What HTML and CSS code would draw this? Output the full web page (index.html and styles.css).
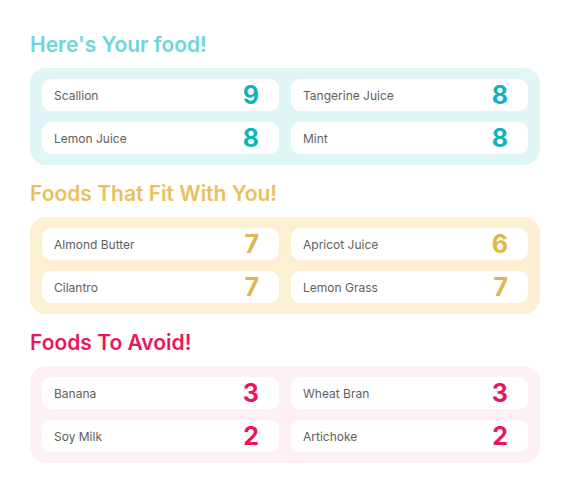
FILE: index.html
```html
<!DOCTYPE html>
<html>
<head>
<meta charset="utf-8">
<link rel="stylesheet" href="styles.css">
</head>
<body>
<section class="group teal">
  <h2 class="title">Here's Your food!</h2>
  <div class="box">
    <div class="card"><span class="name">Scallion</span><span class="num">9</span></div>
    <div class="card"><span class="name">Tangerine Juice</span><span class="num">8</span></div>
    <div class="card"><span class="name">Lemon Juice</span><span class="num">8</span></div>
    <div class="card"><span class="name">Mint</span><span class="num">8</span></div>
  </div>
</section>
<section class="group gold">
  <h2 class="title">Foods That Fit With You!</h2>
  <div class="box">
    <div class="card"><span class="name">Almond Butter</span><span class="num">7</span></div>
    <div class="card"><span class="name">Apricot Juice</span><span class="num">6</span></div>
    <div class="card"><span class="name">Cilantro</span><span class="num">7</span></div>
    <div class="card"><span class="name">Lemon Grass</span><span class="num">7</span></div>
  </div>
</section>
<section class="group pink">
  <h2 class="title">Foods To Avoid!</h2>
  <div class="box">
    <div class="card"><span class="name">Banana</span><span class="num">3</span></div>
    <div class="card"><span class="name">Wheat Bran</span><span class="num">3</span></div>
    <div class="card"><span class="name">Soy Milk</span><span class="num">2</span></div>
    <div class="card"><span class="name">Artichoke</span><span class="num">2</span></div>
  </div>
</section>
</body>
</html>
```
FILE: styles.css
```css
html, body { margin: 0; background: #fff; }
body {
  padding: 32px 30px 0 30px;
  font-family: Inter, "Noto Sans", sans-serif;
}
.group { margin-bottom: 16px; }
.title {
  margin: 0 0 11px 0;
  font-size: 21px;
  line-height: 25px;
  font-weight: 600;
}
.box {
  width: 486px;
  padding: 11px 12px;
  border-radius: 16px;
  display: grid;
  grid-template-columns: 1fr 1fr;
  column-gap: 12px;
  row-gap: 11px;
}
.card {
  height: 32px;
  background: #fff;
  border-radius: 9px;
  display: flex;
  align-items: center;
  justify-content: space-between;
  padding: 0 20px 0 12px;
}
.name {
  font-size: 12px;
  color: #606060;
}
.num {
  font-size: 25px;
  font-weight: 700;
  line-height: 32px;
}
.teal .title { color: #6dd6dc; }
.teal .box { background: #e0f5f6; }
.teal .num { color: #0fb2bf; }
.gold .title { color: #e9c05e; }
.gold .box { background: #fdefd1; }
.gold .num { color: #dfb54c; }
.pink .title { color: #e8185a; }
.pink .box { background: #fff0f3; }
.pink .num { color: #e8175c; }
```
